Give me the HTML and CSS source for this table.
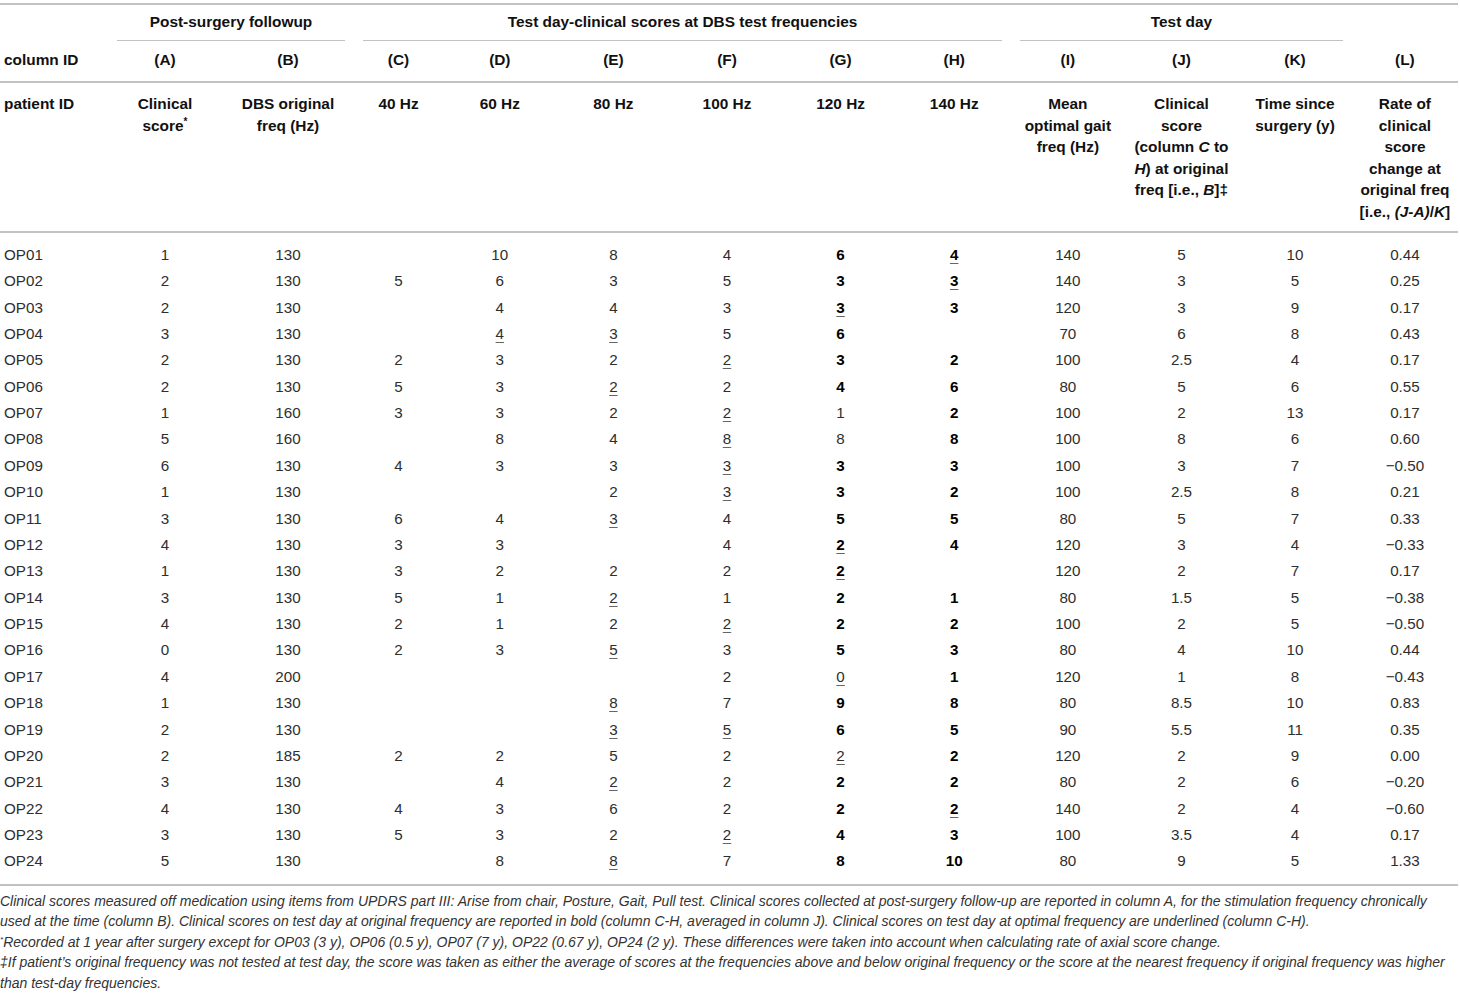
FILE: index.html
```html
<!DOCTYPE html>
<html>
<head>
<meta charset="utf-8">
<link rel="stylesheet" href="styles.css">
</head>
<body>
<table class="tbl">
<colgroup>
<col class="c-id"><col class="c-a"><col class="c-b"><col class="c-c"><col class="c-n"><col class="c-n"><col class="c-n"><col class="c-n"><col class="c-n"><col class="c-n"><col class="c-n"><col class="c-n"><col class="c-l">
</colgroup>
<thead>
<tr class="r-group">
<th></th>
<th colspan="2" class="grp"><div>Post-surgery followup</div></th>
<th colspan="6" class="grp"><div>Test day-clinical scores at DBS test frequencies</div></th>
<th colspan="3" class="grp"><div>Test day</div></th>
<th></th>
</tr>
<tr class="r-colid">
<th class="left">column ID</th>
<th>(A)</th><th>(B)</th><th>(C)</th><th>(D)</th><th>(E)</th><th>(F)</th><th>(G)</th><th>(H)</th><th>(I)</th><th>(J)</th><th>(K)</th><th>(L)</th>
</tr>
<tr class="r-head">
<th class="left">patient ID</th>
<th>Clinical<br>score<sup>*</sup></th>
<th>DBS original<br>freq (Hz)</th>
<th>40 Hz</th>
<th>60 Hz</th>
<th>80 Hz</th>
<th>100 Hz</th>
<th>120 Hz</th>
<th>140 Hz</th>
<th>Mean<br>optimal gait<br>freq (Hz)</th>
<th>Clinical<br>score<br>(column <i>C</i> to<br><i>H</i>) at original<br>freq [i.e., <i>B</i>]‡</th>
<th>Time since<br>surgery (y)</th>
<th>Rate of<br>clinical<br>score<br>change at<br>original freq<br>[i.e., <i>(J-A)</i>/<i>K</i>]</th>
</tr>
</thead>
<tbody>
<tr><td class="left">OP01</td><td>1</td><td>130</td><td></td><td>10</td><td>8</td><td>4</td><td><b>6</b></td><td><b><u>4</u></b></td><td>140</td><td>5</td><td>10</td><td>0.44</td></tr>
<tr><td class="left">OP02</td><td>2</td><td>130</td><td>5</td><td>6</td><td>3</td><td>5</td><td><b>3</b></td><td><b><u>3</u></b></td><td>140</td><td>3</td><td>5</td><td>0.25</td></tr>
<tr><td class="left">OP03</td><td>2</td><td>130</td><td></td><td>4</td><td>4</td><td>3</td><td><b><u>3</u></b></td><td><b>3</b></td><td>120</td><td>3</td><td>9</td><td>0.17</td></tr>
<tr><td class="left">OP04</td><td>3</td><td>130</td><td></td><td><u>4</u></td><td><u>3</u></td><td>5</td><td><b>6</b></td><td></td><td>70</td><td>6</td><td>8</td><td>0.43</td></tr>
<tr><td class="left">OP05</td><td>2</td><td>130</td><td>2</td><td>3</td><td>2</td><td><u>2</u></td><td><b>3</b></td><td><b>2</b></td><td>100</td><td>2.5</td><td>4</td><td>0.17</td></tr>
<tr><td class="left">OP06</td><td>2</td><td>130</td><td>5</td><td>3</td><td><u>2</u></td><td>2</td><td><b>4</b></td><td><b>6</b></td><td>80</td><td>5</td><td>6</td><td>0.55</td></tr>
<tr><td class="left">OP07</td><td>1</td><td>160</td><td>3</td><td>3</td><td>2</td><td><u>2</u></td><td>1</td><td><b>2</b></td><td>100</td><td>2</td><td>13</td><td>0.17</td></tr>
<tr><td class="left">OP08</td><td>5</td><td>160</td><td></td><td>8</td><td>4</td><td><u>8</u></td><td>8</td><td><b>8</b></td><td>100</td><td>8</td><td>6</td><td>0.60</td></tr>
<tr><td class="left">OP09</td><td>6</td><td>130</td><td>4</td><td>3</td><td>3</td><td><u>3</u></td><td><b>3</b></td><td><b>3</b></td><td>100</td><td>3</td><td>7</td><td>−0.50</td></tr>
<tr><td class="left">OP10</td><td>1</td><td>130</td><td></td><td></td><td>2</td><td><u>3</u></td><td><b>3</b></td><td><b>2</b></td><td>100</td><td>2.5</td><td>8</td><td>0.21</td></tr>
<tr><td class="left">OP11</td><td>3</td><td>130</td><td>6</td><td>4</td><td><u>3</u></td><td>4</td><td><b>5</b></td><td><b>5</b></td><td>80</td><td>5</td><td>7</td><td>0.33</td></tr>
<tr><td class="left">OP12</td><td>4</td><td>130</td><td>3</td><td>3</td><td></td><td>4</td><td><b><u>2</u></b></td><td><b>4</b></td><td>120</td><td>3</td><td>4</td><td>−0.33</td></tr>
<tr><td class="left">OP13</td><td>1</td><td>130</td><td>3</td><td>2</td><td>2</td><td>2</td><td><b><u>2</u></b></td><td></td><td>120</td><td>2</td><td>7</td><td>0.17</td></tr>
<tr><td class="left">OP14</td><td>3</td><td>130</td><td>5</td><td>1</td><td><u>2</u></td><td>1</td><td><b>2</b></td><td><b>1</b></td><td>80</td><td>1.5</td><td>5</td><td>−0.38</td></tr>
<tr><td class="left">OP15</td><td>4</td><td>130</td><td>2</td><td>1</td><td>2</td><td><u>2</u></td><td><b>2</b></td><td><b>2</b></td><td>100</td><td>2</td><td>5</td><td>−0.50</td></tr>
<tr><td class="left">OP16</td><td>0</td><td>130</td><td>2</td><td>3</td><td><u>5</u></td><td>3</td><td><b>5</b></td><td><b>3</b></td><td>80</td><td>4</td><td>10</td><td>0.44</td></tr>
<tr><td class="left">OP17</td><td>4</td><td>200</td><td></td><td></td><td></td><td>2</td><td><u>0</u></td><td><b>1</b></td><td>120</td><td>1</td><td>8</td><td>−0.43</td></tr>
<tr><td class="left">OP18</td><td>1</td><td>130</td><td></td><td></td><td><u>8</u></td><td>7</td><td><b>9</b></td><td><b>8</b></td><td>80</td><td>8.5</td><td>10</td><td>0.83</td></tr>
<tr><td class="left">OP19</td><td>2</td><td>130</td><td></td><td></td><td><u>3</u></td><td><u>5</u></td><td><b>6</b></td><td><b>5</b></td><td>90</td><td>5.5</td><td>11</td><td>0.35</td></tr>
<tr><td class="left">OP20</td><td>2</td><td>185</td><td>2</td><td>2</td><td>5</td><td>2</td><td><u>2</u></td><td><b>2</b></td><td>120</td><td>2</td><td>9</td><td>0.00</td></tr>
<tr><td class="left">OP21</td><td>3</td><td>130</td><td></td><td>4</td><td><u>2</u></td><td>2</td><td><b>2</b></td><td><b>2</b></td><td>80</td><td>2</td><td>6</td><td>−0.20</td></tr>
<tr><td class="left">OP22</td><td>4</td><td>130</td><td>4</td><td>3</td><td>6</td><td>2</td><td><b>2</b></td><td><b><u>2</u></b></td><td>140</td><td>2</td><td>4</td><td>−0.60</td></tr>
<tr><td class="left">OP23</td><td>3</td><td>130</td><td>5</td><td>3</td><td>2</td><td><u>2</u></td><td><b>4</b></td><td><b>3</b></td><td>100</td><td>3.5</td><td>4</td><td>0.17</td></tr>
<tr><td class="left">OP24</td><td>5</td><td>130</td><td></td><td>8</td><td><u>8</u></td><td>7</td><td><b>8</b></td><td><b>10</b></td><td>80</td><td>9</td><td>5</td><td>1.33</td></tr>
</tbody>
</table>
<div class="notes">
<p>Clinical scores measured off medication using items from UPDRS part III: Arise from chair, Posture, Gait, Pull test. Clinical scores collected at post-surgery follow-up are reported in column A, for the stimulation frequency chronically used at the time (column B). Clinical scores on test day at original frequency are reported in bold (column C-H, averaged in column J). Clinical scores on test day at optimal frequency are underlined (column C-H).</p>
<p><sup>*</sup>Recorded at 1 year after surgery except for OP03 (3 y), OP06 (0.5 y), OP07 (7 y), OP22 (0.67 y), OP24 (2 y). These differences were taken into account when calculating rate of axial score change.</p>
<p>‡If patient’s original frequency was not tested at test day, the score was taken as either the average of scores at the frequencies above and below original frequency or the score at the nearest frequency if original frequency was higher than test-day frequencies.</p>
</div>
</body>
</html>
```

FILE: styles.css
```css
html, body {
  margin: 0;
  padding: 0;
  background: #fff;
}
body {
  font-family: "Liberation Sans", Arial, Helvetica, sans-serif;
  color: #333;
}
.tbl {
  width: 1458px;
  margin-top: 3px;
  border-collapse: collapse;
  table-layout: fixed;
  border-top: 2px solid #c2c2c2;
  border-bottom: 2px solid #c2c2c2;
}
.c-id { width: 108px; }
.c-a { width: 114px; }
.c-b { width: 132px; }
.c-c { width: 89px; }
.c-n { width: 113.6px; }
.c-l { width: 106px; }

th {
  font-weight: bold;
  color: #111;
  font-size: 15.4px;
  line-height: 20px;
  text-align: center;
  padding: 0;
  white-space: nowrap;
}

.r-group th { padding: 7px 0 0; vertical-align: top; }
.grp div {
  margin: 0 9px;
  padding-bottom: 8px;
  border-bottom: 1px solid #c2c2c2;
}
.r-colid th {
  padding: 9px 0 11px;
  border-bottom: 2px solid #c2c2c2;
}
.r-head th {
  vertical-align: top;
  line-height: 21.6px;
  padding: 10px 0 8px;
  border-bottom: 2px solid #c2c2c2;
}
.r-colid th.left,
.r-head th.left,
td.left { text-align: left; padding-left: 4px; }
th sup {
  font-size: 10px;
  line-height: 0;
  vertical-align: 6px;
}
td {
  font-size: 15.2px;
  line-height: 20px;
  padding: 3.2px 0;
  text-align: center;
  color: #2e2e2e;
  white-space: nowrap;
}
td b { color: #000; font-weight: bold; }
td u {
  text-decoration: underline;
  text-decoration-thickness: 1px;
  text-underline-offset: 3px;
  text-decoration-color: #666;
}
tbody tr:first-child td { padding-top: 12.2px; }
tbody tr:last-child td { padding-bottom: 12.2px; }

.notes {
  margin-top: 5px;
  font-style: italic;
  font-size: 14px;
  line-height: 20.6px;
  color: #333;
  width: 1460px;
}
.notes p { margin: 0; }
.notes sup {
  font-size: 8px;
  line-height: 0;
  vertical-align: 5px;
}
```
